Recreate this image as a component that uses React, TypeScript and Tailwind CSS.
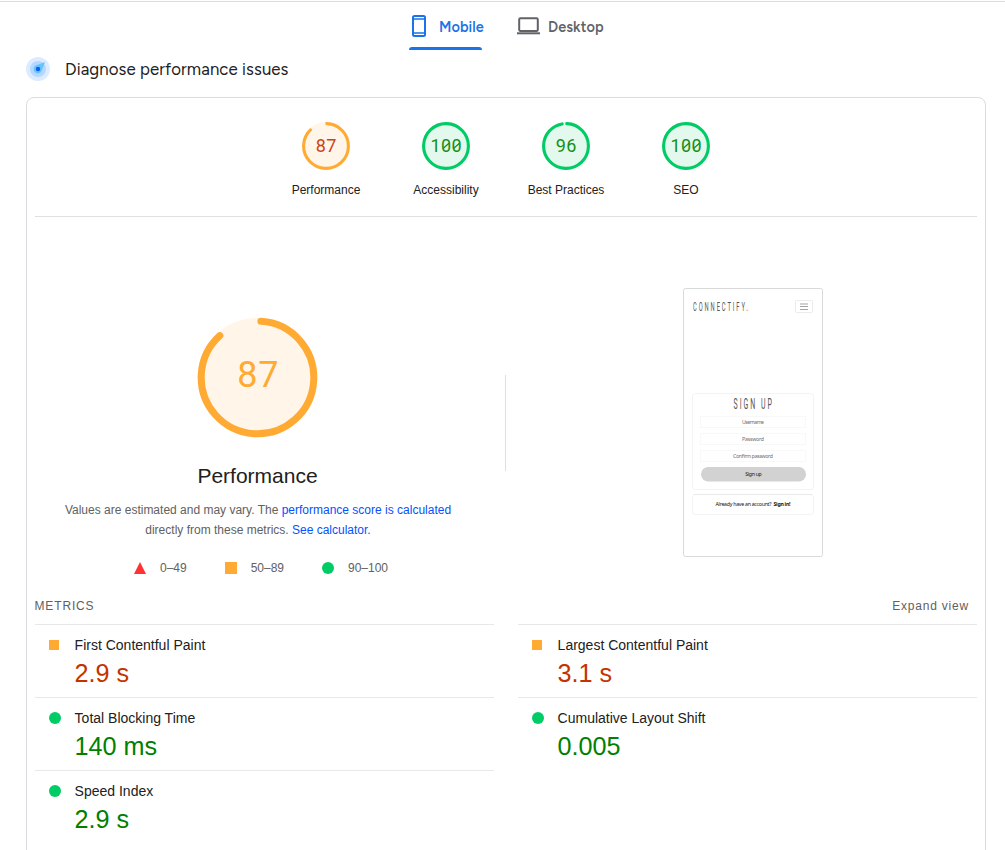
import React from "react";

type Level = "pass" | "average";

const scores: { label: string; value: number; level: Level; arc: number }[] = [
  { label: "Performance", value: 87, level: "average", arc: 312 },
  { label: "Accessibility", value: 100, level: "pass", arc: 360 },
  { label: "Best Practices", value: 96, level: "pass", arc: 345.5 },
  { label: "SEO", value: 100, level: "pass", arc: 360 },
];

function Ring({ size, r, width, start, arc, color }: { size: number; r: number; width: number; start: number; arc: number; color: string }) {
  const c = size / 2;
  const len = 2 * Math.PI * r;
  return (
    <>
      <circle cx={c} cy={c} r={r + width / 2} fill={color} fillOpacity={0.11} />
      <circle
        cx={c}
        cy={c}
        r={r}
        fill="none"
        stroke={color}
        strokeWidth={width}
        strokeLinecap="round"
        strokeDasharray={arc >= 360 ? undefined : `${(arc / 360) * len} ${len}`}
        transform={`rotate(${-90 + start} ${c} ${c})`}
      />
    </>
  );
}

function SmallGauge({ label, value, level, arc }: { label: string; value: number; level: Level; arc: number }) {
  const digits = String(value).split("");
  const pitch = 10.5;
  const x0 = 24 - (digits.length * pitch) / 2 + pitch / 2;
  const ink = level === "pass" ? "#159015" : "#cc4416";
  return (
    <div className="flex w-[120px] flex-col items-center">
      <svg className="h-12 w-12" viewBox="0 0 48 48">
        <Ring size={48} r={22.4} width={3.1} start={2} arc={arc} color={level === "pass" ? "#00cc66" : "#ffaa33"} />
        {digits.map((d, i) => (
          <g key={i}>
            <text x={x0 + i * pitch} y="30.2" textAnchor="middle" fontFamily="Roboto, sans-serif" fontSize="18" fill={ink}>
              {d}
            </text>
            {d === "0" && (
              <path d={`M${x0 + i * pitch - 3} 26.6L${x0 + i * pitch + 3} 21.3`} stroke={ink} strokeWidth="1.3" />
            )}
          </g>
        ))}
      </svg>
      <span className="mt-[11px] text-xs leading-[18px] text-[#212121]">{label}</span>
    </div>
  );
}

function Metric({ label, value, level }: { label: string; value: string; level: Level }) {
  return (
    <div className="flex h-[73px] border-t border-[#e8e8e8] pl-[14px] pt-[10px]">
      <div className="flex h-5 w-[25.6px] shrink-0 items-center">
        {level === "pass" ? <i className="h-3 w-3 rounded-full bg-[#00cc66]" /> : <i className="h-[10px] w-[10px] bg-[#ffaa33]" />}
      </div>
      <div>
        <div className="text-sm leading-5 text-[#212121]">{label}</div>
        <div className={`text-[25.2px] leading-[36px] ${level === "pass" ? "text-[#008000]" : "text-[#c33300]"}`}>{value}</div>
      </div>
    </div>
  );
}

function Preview() {
  return (
    <svg className="h-[269px] w-[140px]" viewBox="0 0 140 269" fontFamily="'Noto Sans', sans-serif" textAnchor="middle">
      <rect x=".5" y=".5" width="139" height="268" rx="2" fill="#fff" stroke="#d9d9d9" />
      <g fontFamily="Roboto, sans-serif" fill="#555">
        <text transform="translate(10 23) scale(.48 1)" fontSize="12" textAnchor="start" textLength="114">CONNECTIFY.</text>
        <text transform="translate(50.5 120.5) scale(.48 1)" fontSize="14.5" textAnchor="start" textLength="80">SIGN UP</text>
      </g>
      <rect x="112.5" y="12.5" width="17" height="12" rx="1" fill="none" stroke="#ececec" />
      <path d="M117 16h8M117 18.5h8M117 21.5h8" stroke="#999" strokeWidth=".9" />
      <rect x="9.5" y="105.5" width="121" height="96" rx="3" fill="none" stroke="#f3f3f3" />
      <g fill="none" stroke="#f8f8f8">
        <rect x="17.5" y="128.5" width="105" height="11" />
        <rect x="17.5" y="145.5" width="105" height="11" />
        <rect x="17.5" y="162.5" width="105" height="11" />
      </g>
      <g fontSize="5.2" fill="#666d73">
        <text x="70" y="136" textLength="22">Username</text>
        <text x="70" y="153" textLength="22">Password</text>
        <text x="70" y="170" textLength="40">Confirm password</text>
      </g>
      <rect x="18" y="179" width="105" height="14.5" rx="7.25" fill="#d2d2d2" />
      <text x="70.5" y="188" fontSize="5.2" fill="#111" textLength="16.5">Sign up</text>
      <rect x="9.5" y="206.5" width="121" height="20" rx="3" fill="none" stroke="#f3f3f3" />
      <path d="M11 206.5h118" stroke="#e9e9e9" />
      <text x="32.5" y="218" fontSize="5.2" fill="#111" textAnchor="start" textLength="56">Already have an account?</text>
      <text x="90.5" y="218" fontSize="5.2" fontWeight="700" fill="#111" textAnchor="start" textLength="17">Sign in!</text>
    </svg>
  );
}

export default function App() {
  return (
    <div className="h-[850px] overflow-hidden bg-white pt-px font-['Liberation_Sans',sans-serif]">
      <div className="flex h-[49px] border-t border-[#dadce0] pl-[409px] font-['Figtree','Open_Sans',sans-serif] text-[14.5px] font-semibold leading-5">
        <div className="flex w-[73px] flex-col text-[#1a73e8]">
          <div className="flex h-[45px] items-center pt-[3px] pl-[3px]">
            <svg className="h-[22px] w-[14px] shrink-0" viewBox="0 0 14 22" fill="none" stroke="currentColor">
              <rect x="1" y="1" width="12" height="20" rx="1.5" strokeWidth="2" />
              <path d="M1 4h12M1 18h12" strokeWidth="1.5" />
            </svg>
            <span className="ml-[13px] whitespace-nowrap pt-[2px] tracking-[0.05px]">Mobile</span>
          </div>
          <div className="h-[3px] rounded-t-[3px] bg-[#1a73e8]" />
        </div>
        <div className="ml-[35px] flex h-[45px] items-center pt-[3px] text-[#5f6368]">
          <svg className="h-[18px] w-[23px]" viewBox="0 0 23 18" fill="none" stroke="currentColor" strokeWidth="2">
            <rect x="2.2" y="1.2" width="18.6" height="12.8" rx="1.2" />
            <path d="M0 16.3h23" />
          </svg>
          <span className="ml-2 pt-[2px] tracking-[0.1px]">Desktop</span>
        </div>
      </div>

      <div className="flex h-[47px] pl-[26px] pt-[7px]">
        <svg className="h-6 w-6" viewBox="0 0 24 24">
          <circle cx="12" cy="12" r="12" fill="#dcebff" />
          <circle cx="12" cy="12" r="8" fill="#b5d7fd" />
          <path d="M19 5L15.6 14A4.2 4.2 0 1 1 9.6 8.6Z" fill="#65c3fd" />
          <circle cx="12" cy="12" r="2.2" fill="#0c5cf5" />
        </svg>
        <h1 className="ml-[15px] font-['Figtree','Open_Sans',sans-serif] text-[16.8px] leading-6 tracking-[0.1px] text-[#202124]">
          Diagnose performance issues
        </h1>
      </div>

      <main className="ml-[26px] h-[760px] w-[960px] rounded-t-lg border border-[#dadce0] px-2">
        <div className="flex h-[119px] justify-center border-b border-[#e0e0e0] pt-6">
          {scores.map((s) => (
            <SmallGauge key={s.label} {...s} />
          ))}
        </div>

        <section className="flex h-[376px]">
          <div className="flex w-[445px] flex-col items-center pt-[100px]">
            <svg className="h-[121px] w-[121px]" viewBox="0 0 121 121">
              <Ring size={121} r={56.3} width={7} start={3.5} arc={314} color="#ffaa33" />
              <text x="40.2" y="70.4" fontFamily="Roboto, sans-serif" fontSize="36" fill="#ffaa33" textLength="41.2">
                87
              </text>
            </svg>
            <h2 className="mt-[22px] text-[21px] leading-8 text-[#212121]">Performance</h2>
            <p className="ml-px mt-2 whitespace-nowrap text-center text-xs leading-5 text-[#616161]">
              Values are estimated and may vary. The <a className="text-[#0550ff]">performance score is calculated</a>
              <br />
              directly from these metrics. <a className="text-[#0550ff]">See calculator.</a>
            </p>
            <div className="ml-[7px] mt-[18px] flex h-5 w-[254px] items-center justify-between text-xs text-[#616161]">
              <span className="flex items-center gap-[14px]">
                <svg className="h-3 w-3" viewBox="0 0 12 12"><path d="M6 0L12 12H0Z" fill="#ff3333" /></svg>0–49
              </span>
              <span className="flex items-center gap-[14px]"><i className="h-3 w-3 bg-[#ffaa33]" />50–89</span>
              <span className="flex items-center gap-[14px]"><i className="h-3 w-3 rounded-full bg-[#00cc66]" />90–100</span>
            </div>
          </div>
          <div className="ml-[25px] mt-[158px] h-24 w-px bg-[#e0e0e0]" />
          <div className="ml-6 flex w-[445px] justify-center pt-[71px]">
            <Preview />
          </div>
        </section>

        <div className="flex h-[31px] justify-between pr-2 pt-[3px] text-xs leading-5 text-[#616161]">
          <span className="-ml-[0.5px] tracking-[0.85px]">METRICS</span>
          <span className="tracking-[0.8px]">Expand view</span>
        </div>
        <div className="grid grid-cols-2 gap-x-6">
          <Metric label="First Contentful Paint" value="2.9 s" level="average" />
          <Metric label="Largest Contentful Paint" value="3.1 s" level="average" />
          <Metric label="Total Blocking Time" value="140 ms" level="pass" />
          <Metric label="Cumulative Layout Shift" value="0.005" level="pass" />
          <Metric label="Speed Index" value="2.9 s" level="pass" />
        </div>
      </main>
    </div>
  );
}
